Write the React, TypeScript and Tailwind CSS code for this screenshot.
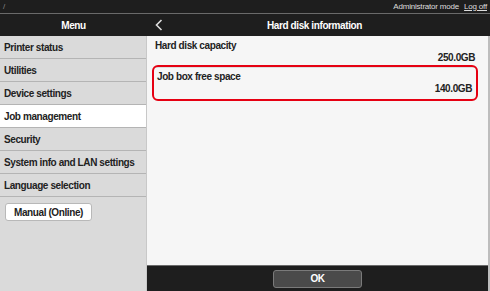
import React from "react";

const menuItems = [
  "Printer status",
  "Utilities",
  "Device settings",
  "Job management",
  "Security",
  "System info and LAN settings",
  "Language selection",
];

export default function App() {
  return (
    <div
      className="w-[490px] h-[291px] flex flex-col bg-[#dadada] text-[#222] overflow-hidden"
      style={{ fontFamily: '"Liberation Sans", Arial, sans-serif' }}
    >
      {/* top bar */}
      <div className="h-[14px] bg-[#1e1e1e] border-b border-[#6a6a6a] flex items-center justify-between px-[3px] text-[8px] leading-none">
        <span className="text-[#888]">/</span>
        <div className="flex items-center gap-[5px] text-[#ddd] tracking-[-0.2px]">
          <span>Administrator mode</span>
          <span className="underline">Log off</span>
        </div>
      </div>

      {/* header */}
      <div className="h-[22px] bg-[#1e1e1e] flex text-white text-[10px] tracking-[-0.4px] font-bold">
        <div className="w-[147px] flex items-center justify-center">Menu</div>
        <div className="flex-1 flex items-center relative">
          <svg className="absolute left-[8px]" width="8" height="12" viewBox="0 0 8 12">
            <path d="M6.5 1 L1.5 6 L6.5 11" stroke="#ddd" strokeWidth="1.6" fill="none" />
          </svg>
          <div className="flex-1 text-center pr-[8px]">Hard disk information</div>
        </div>
      </div>

      <div className="flex-1 flex min-h-0 text-[10px] tracking-[-0.4px] font-bold">
        {/* menu */}
        <div className="w-[147px] bg-[#dadada] border-r border-[#c8c8c8] flex flex-col">
          {menuItems.map((item) => (
            <div
              key={item}
              className={`h-[23px] flex items-center px-[4px] border-b border-[#b4b4b4] ${
                item === "Job management" ? "bg-white" : ""
              }`}
            >
              {item}
            </div>
          ))}
          <div className="px-[5px] pt-[6px]">
            <button className="w-[87px] h-[18px] bg-white border border-[#b8b8b8] rounded-[3px] text-[#222] flex items-center justify-center">
              Manual (Online)
            </button>
          </div>
        </div>

        {/* content */}
        <div className="flex-1 flex flex-col bg-[#f6f6f6] border-r-2 border-[#bdbdbd]">
          <div className="flex-1 pl-[5px] pr-[10px] pt-[4px]">
            <div className="pb-[3px] border-b border-[#dedede] ml-[3px] mr-[3px]">
              <div className="leading-[12px]">Hard disk capacity</div>
              <div className="leading-[12px] text-right">250.0GB</div>
            </div>
            <div className="mt-[-3px] h-[36px] border-2 border-[#e60012] rounded-[6px] px-[3px] pb-[1px] flex flex-col justify-center">
              <div className="leading-[12px]">Job box free space</div>
              <div className="leading-[12px] text-right pr-[1px]">140.0GB</div>
            </div>
          </div>
          <div className="h-[26px] bg-[#1e1e1e] border-t border-[#6a6a6a] flex items-center justify-center">
            <button className="w-[89px] h-[18px] bg-[#4a4a4a] border border-[#7a7a7a] rounded-[3px] text-white">
              OK
            </button>
          </div>
        </div>
      </div>
    </div>
  );
}
